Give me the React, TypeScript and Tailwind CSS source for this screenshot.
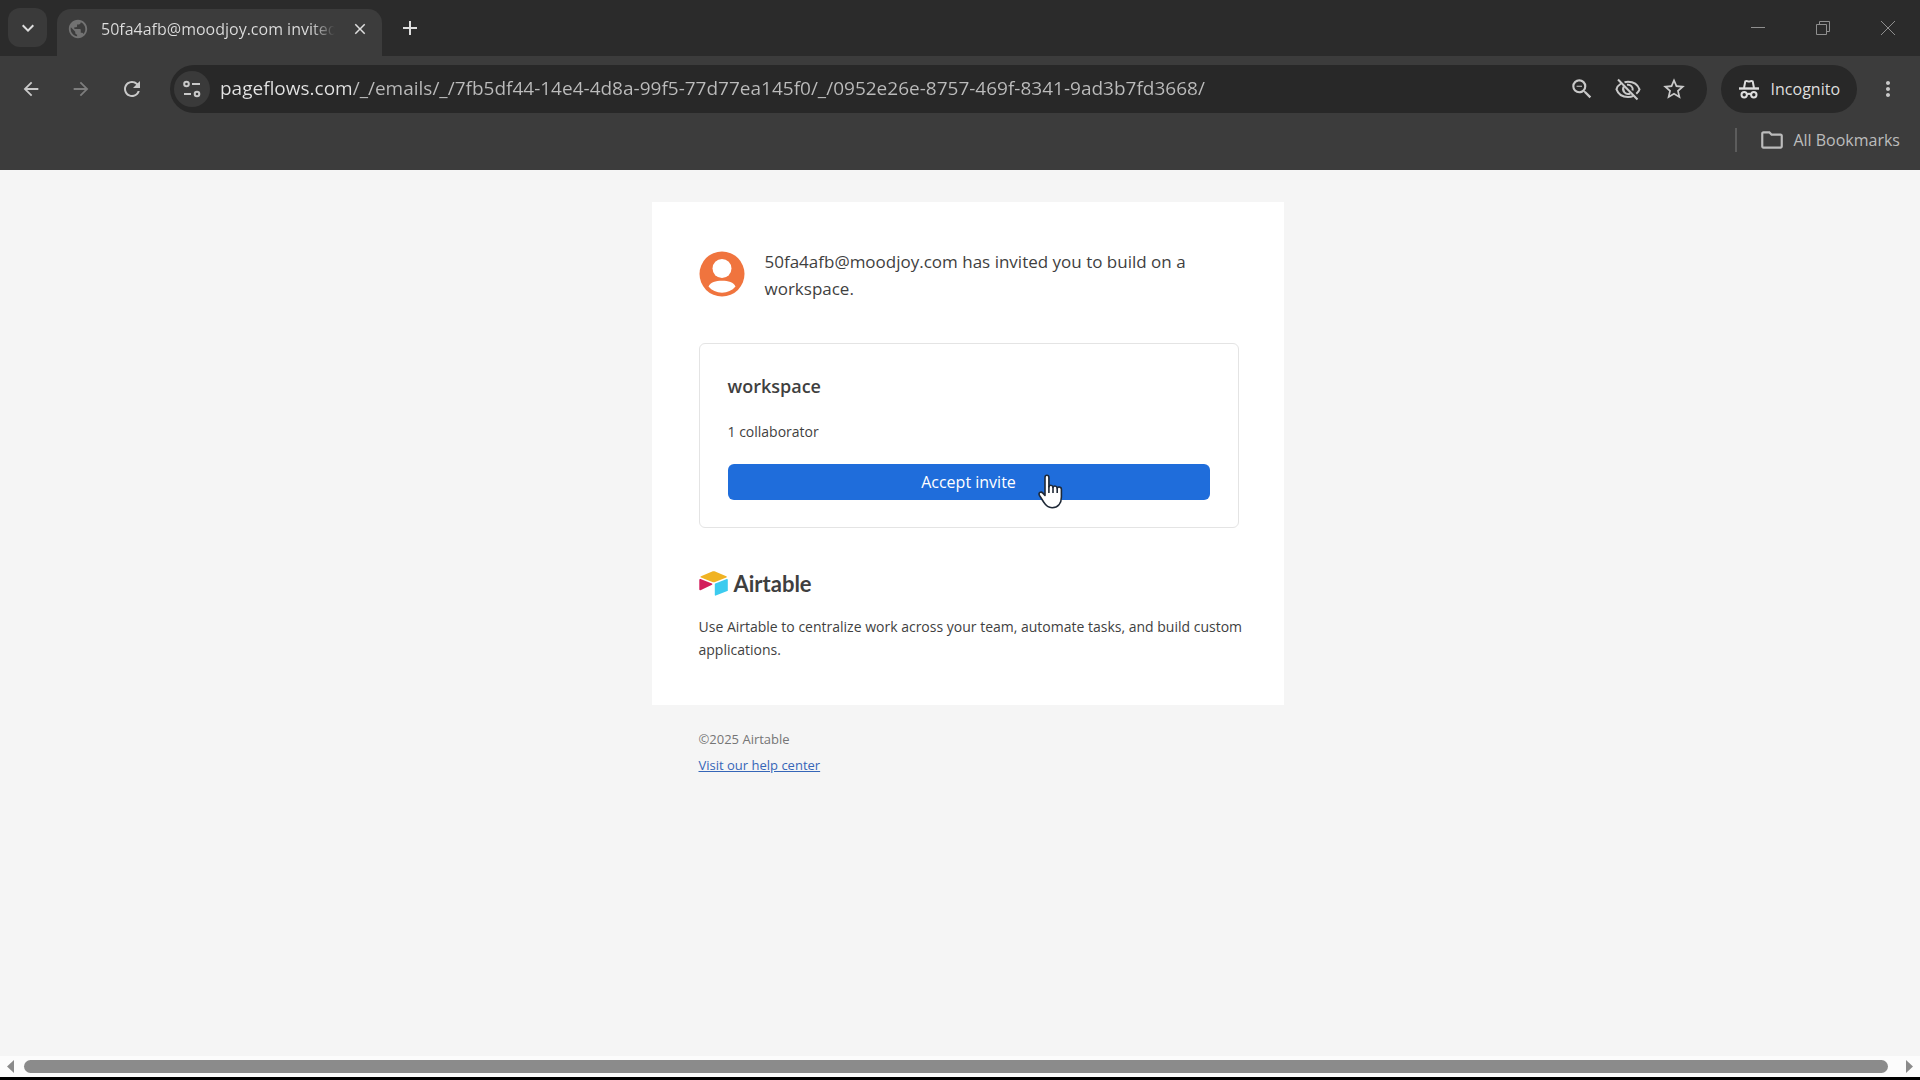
import { useState } from "react";
import {
  MdArrowBack,
  MdArrowForward,
  MdClose,
  MdAdd,
  MdKeyboardArrowDown,
  MdMoreVert,
  MdOutlineFolder,
  MdOutlineZoomOut,
  MdPublic,
  MdRefresh,
  MdStarBorder,
} from "react-icons/md";

const PAGE_URL =
  "pageflows.com/_/emails/_/7fb5df44-14e4-4d8a-99f5-77d77ea145f0/_/0952e26e-8757-469f-8341-9ad3b7fd3668/";

function SiteInfoIcon() {
  return (
    <svg viewBox="0 0 20 20" className="size-5" fill="none" stroke="currentColor" strokeWidth="2">
      <circle cx="4.5" cy="5" r="2.3" />
      <path d="M10 5h8M2 15h7" />
      <circle cx="15" cy="15" r="2.3" />
    </svg>
  );
}

function EyeOffIcon() {
  return (
    <svg viewBox="0 0 26 24" className="h-6 w-[26px]" fill="none" stroke="currentColor" strokeWidth="2">
      <path d="M6 6.500C3.600 8 2 10.300 1.500 12.300C3.200 17 7.500 20 13 20c2 0 3.900-.4 5.500-1.200" />
      <path d="M9.500 5.200C10.600 4.900 11.800 4.700 13 4.700c5.500 0 9.800 3 11.500 7.600c-.6 1.700-1.700 3.200-3.200 4.500" />
      <path d="M8.800 9.500a5 5 0 0 0 6.500 7M12 7.800a4.800 4.800 0 0 1 5.600 5.800" />
      <path d="M3 2.500L22.500 22.500" />
    </svg>
  );
}

function IncognitoIcon() {
  return (
    <svg viewBox="0 0 20 20" className="size-5" fill="none" stroke="currentColor" strokeWidth="2">
      <path d="M5 9L6.300 2.300c1.200-.6 2.200.1 3.700.1s2.500-.7 3.700-.1L15 9" />
      <path d="M0 9.500h20" strokeWidth="2.400" />
      <circle cx="5.200" cy="15.800" r="2.700" />
      <circle cx="14.800" cy="15.800" r="2.700" />
      <path d="M7.800 15.500c1.400-.9 3-.9 4.400 0" />
    </svg>
  );
}

function AirtableMark() {
  return (
    <svg viewBox="0 0 29 25" className="h-[25px] w-[29px]">
      <path d="M13.200.6L2 5.200c-.7.300-.7 1.100 0 1.400l11.300 4.400c.9.400 1.900.4 2.800 0L27.300 6.600c.7-.3.700-1.100 0-1.400L16.100.6c-.9-.4-2-.4-2.900 0z" fill="#f0b323" />
      <path d="M15.800 13.200v10.700c0 .5.500.9 1 .7l11.500-4.500c.3-.1.500-.4.500-.7V8.700c0-.5-.5-.9-1-.7l-11.500 4.500c-.3.100-.5.400-.5.700z" fill="#3ccbef" />
      <path d="M13 13.700L1.500 19.300c-.5.200-1.200-.1-1.200-.7V8.700c0-.6.700-1 1.200-.7L12.900 12.500c.6.200.6.900.1 1.200z" fill="#d31d5b" />
    </svg>
  );
}

function HandCursor() {
  return (
    <svg viewBox="0 0 27 35" className="pointer-events-none absolute left-[310px] top-[10px] h-[35px] w-[27px]">
      <path
        d="M7 3.500c0-1.300.8-2.200 1.900-2.200s2 .9 2 2.200v9.200c.3-1 1-1.500 1.900-1.500 1.100 0 1.900.7 2.200 2 .4-.8 1.100-1.200 1.900-1.200 1.200 0 2 .8 2.300 2 .4-.6 1-1 1.800-1 1.400 0 2.400.9 2.400 2.300V23c0 6.500-3.500 10.700-9.300 10.700-3.600 0-6-1.600-8-5L1.500 21.500c-.7-1.300-.5-2.500.4-3.100 1-.6 2.100-.3 3 .7L7 21.500z"
        fill="#fff"
        stroke="#1f2937"
        strokeWidth="1.600"
        strokeLinejoin="round"
      />
      <path d="M10.900 12v7M15 13v6M19.200 14v5" stroke="#1f2937" strokeWidth="1.600" />
    </svg>
  );
}

function TabStrip() {
  return (
    <header className="flex h-14 items-end bg-[#2b2b2b] pl-2 text-[#dedede]">
      <button aria-label="Search tabs" className="mb-[9px] flex size-[39px] items-center justify-center rounded-xl bg-[#3a3a3a]">
        <MdKeyboardArrowDown className="size-6" />
      </button>
      <div className="ml-[10px] flex h-[47px] w-[325px] items-center rounded-t-[14px] bg-[#3c3c3c] px-[10px] pb-2">
        <MdPublic className="size-[22px] shrink-0 text-[#727272]" />
        <span className="ml-3 flex-1 overflow-hidden whitespace-nowrap bg-[linear-gradient(to_right,#dedede_210px,transparent_234px)] bg-clip-text text-[16px] text-transparent">
          50fa4afb@moodjoy.com invited
        </span>
        <button aria-label="Close tab" className="ml-2 flex size-6 items-center justify-center">
          <MdClose className="size-[18px]" />
        </button>
      </div>
      <button aria-label="New tab" className="mb-4 ml-4 flex size-6 items-center justify-center">
        <MdAdd className="size-6" />
      </button>
      <div className="mb-[20px] ml-auto mr-6 flex gap-[49px] text-[#8f8f8f]">
        <button aria-label="Minimize">
          <svg viewBox="0 0 16 16" className="size-4" stroke="currentColor"><path d="M1 7.500h14" /></svg>
        </button>
        <button aria-label="Restore">
          <svg viewBox="0 0 16 16" className="size-4" fill="none" stroke="currentColor">
            <path d="M1.500 4.500h10v10h-10zM4.500 4.500v-3h10v10h-3" />
          </svg>
        </button>
        <button aria-label="Close window">
          <svg viewBox="0 0 16 16" className="size-4" stroke="currentColor"><path d="M1 1l14 14M15 1L1 15" /></svg>
        </button>
      </div>
    </header>
  );
}

function Toolbar() {
  const [url, setUrl] = useState(PAGE_URL);

  return (
    <div className="bg-[#3c3c3c] text-[#c9c9c9]">
      <div className="flex h-[65px] items-center px-5">
        <button aria-label="Back"><MdArrowBack className="size-[22px]" /></button>
        <button aria-label="Forward" className="ml-7 text-[#7d7d7d]"><MdArrowForward className="size-[22px]" /></button>
        <button aria-label="Reload" className="ml-7"><MdRefresh className="size-6" /></button>
        <div className="ml-[26px] flex h-12 flex-1 items-center rounded-full bg-[#282828] pl-1 pr-5">
          <button aria-label="Site information" className="flex size-9 items-center justify-center rounded-full bg-[#3a3a3a]">
            <SiteInfoIcon />
          </button>
          <input
            aria-label="Address"
            value={url}
            onChange={(e) => setUrl(e.target.value)}
            className="ml-[10px] min-w-0 flex-1 bg-[linear-gradient(to_right,#e3e3e3_132px,#bcbcbc_132px)] bg-clip-text text-[19px] text-transparent caret-white outline-none"
          />
          <div className="flex items-center gap-5">
            <button aria-label="Zoom"><MdOutlineZoomOut className="size-[26px]" /></button>
            <button aria-label="Third-party cookies blocked"><EyeOffIcon /></button>
            <button aria-label="Bookmark this tab"><MdStarBorder className="size-[26px]" /></button>
          </div>
        </div>
        <button className="ml-[14px] flex h-12 items-center gap-3 rounded-full bg-[#282828] pl-[18px] pr-[17px] text-[16px] text-[#dedede]">
          <IncognitoIcon />
          Incognito
        </button>
        <button aria-label="Menu" className="ml-[19px]"><MdMoreVert className="size-6" /></button>
      </div>
      <div className="flex h-[49px] items-start justify-end pr-5 pt-[7px]">
        <button className="flex h-6 items-center border-l-2 border-[#5c5c5c] pl-[22px] text-[16px] text-[#bcbcbc]">
          <MdOutlineFolder className="mr-2 size-[26px]" />
          All Bookmarks
        </button>
      </div>
    </div>
  );
}

function InviteEmail() {
  return (
    <main className="flex-1 overflow-hidden bg-[#f5f5f5] pl-[15px] pt-8 text-[#3f3f3f]">
      <div className="mx-auto w-full max-w-[632px]">
        <section className="bg-white pb-[44px] pl-[47px] pr-[45px] pt-[45px]">
          <div className="flex items-start gap-5">
            <svg viewBox="0 0 46 46" className="mt-1 size-[46px] shrink-0">
              <circle cx="23" cy="23" r="22.500" fill="#f0743e" />
              <circle cx="23" cy="17.500" r="9.500" fill="#fff" />
              <path d="M9.500 35.500c2-4.300 7-5.800 13.500-5.800s11.500 1.500 13.500 5.800c-3.400 4-8 6.200-13.500 6.200s-10.100-2.200-13.500-6.200z" fill="#fff" />
            </svg>
            <p className="pt-px text-[17px] leading-[27px]">
              50fa4afb@moodjoy.com has invited you to build on a
              <br />
              workspace.
            </p>
          </div>

          <div className="mt-[41px] rounded-md border border-[#e4e4e4] px-7 pb-[27px] pt-7">
            <h1 className="text-[18px] font-semibold leading-7">workspace</h1>
            <p className="mt-5 text-[14px] leading-[23px]">1 collaborator</p>
            <div className="relative mt-[21px]">
              <button className="h-9 w-full rounded-md bg-[#1f6ddb] text-[16px] text-white">Accept invite</button>
              <HandCursor />
            </div>
          </div>

          <div className="mt-[41px] flex h-7 items-center gap-1.5">
            <AirtableMark />
            <span className="font-['Lato'] text-[22px] font-bold">Airtable</span>
          </div>
          <p className="mt-[18px] whitespace-nowrap text-[14px] leading-[23px]">
            Use Airtable to centralize work across your team, automate tasks, and build custom
            <br />
            applications.
          </p>
        </section>
        <footer className="px-[47px] pt-[21px] text-[13px] leading-[26px] text-[#757575]">
          <p>©2025 Airtable</p>
          <a href="#help" className="text-[#3566b8] underline">Visit our help center</a>
        </footer>
      </div>
    </main>
  );
}

function ScrollBar() {
  return (
    <div className="flex h-6 items-center gap-[10px] border-b-[3px] border-black bg-[#fcfcfc] px-[7px] text-[#8b8b8b]">
      <svg viewBox="0 0 7 13" className="h-[13px] w-[7px]" fill="currentColor"><path d="M7 0v13L0 6.500z" /></svg>
      <div className="mr-2 h-[13px] flex-1 rounded-full bg-[#8b8b8b]" />
      <svg viewBox="0 0 7 13" className="h-[13px] w-[7px]" fill="currentColor"><path d="M0 0v13l7-6.500z" /></svg>
    </div>
  );
}

export default function App() {
  return (
    <div className="flex min-h-screen flex-col font-['Open_Sans','Noto_Sans',sans-serif]">
      <TabStrip />
      <Toolbar />
      <InviteEmail />
      <ScrollBar />
    </div>
  );
}
